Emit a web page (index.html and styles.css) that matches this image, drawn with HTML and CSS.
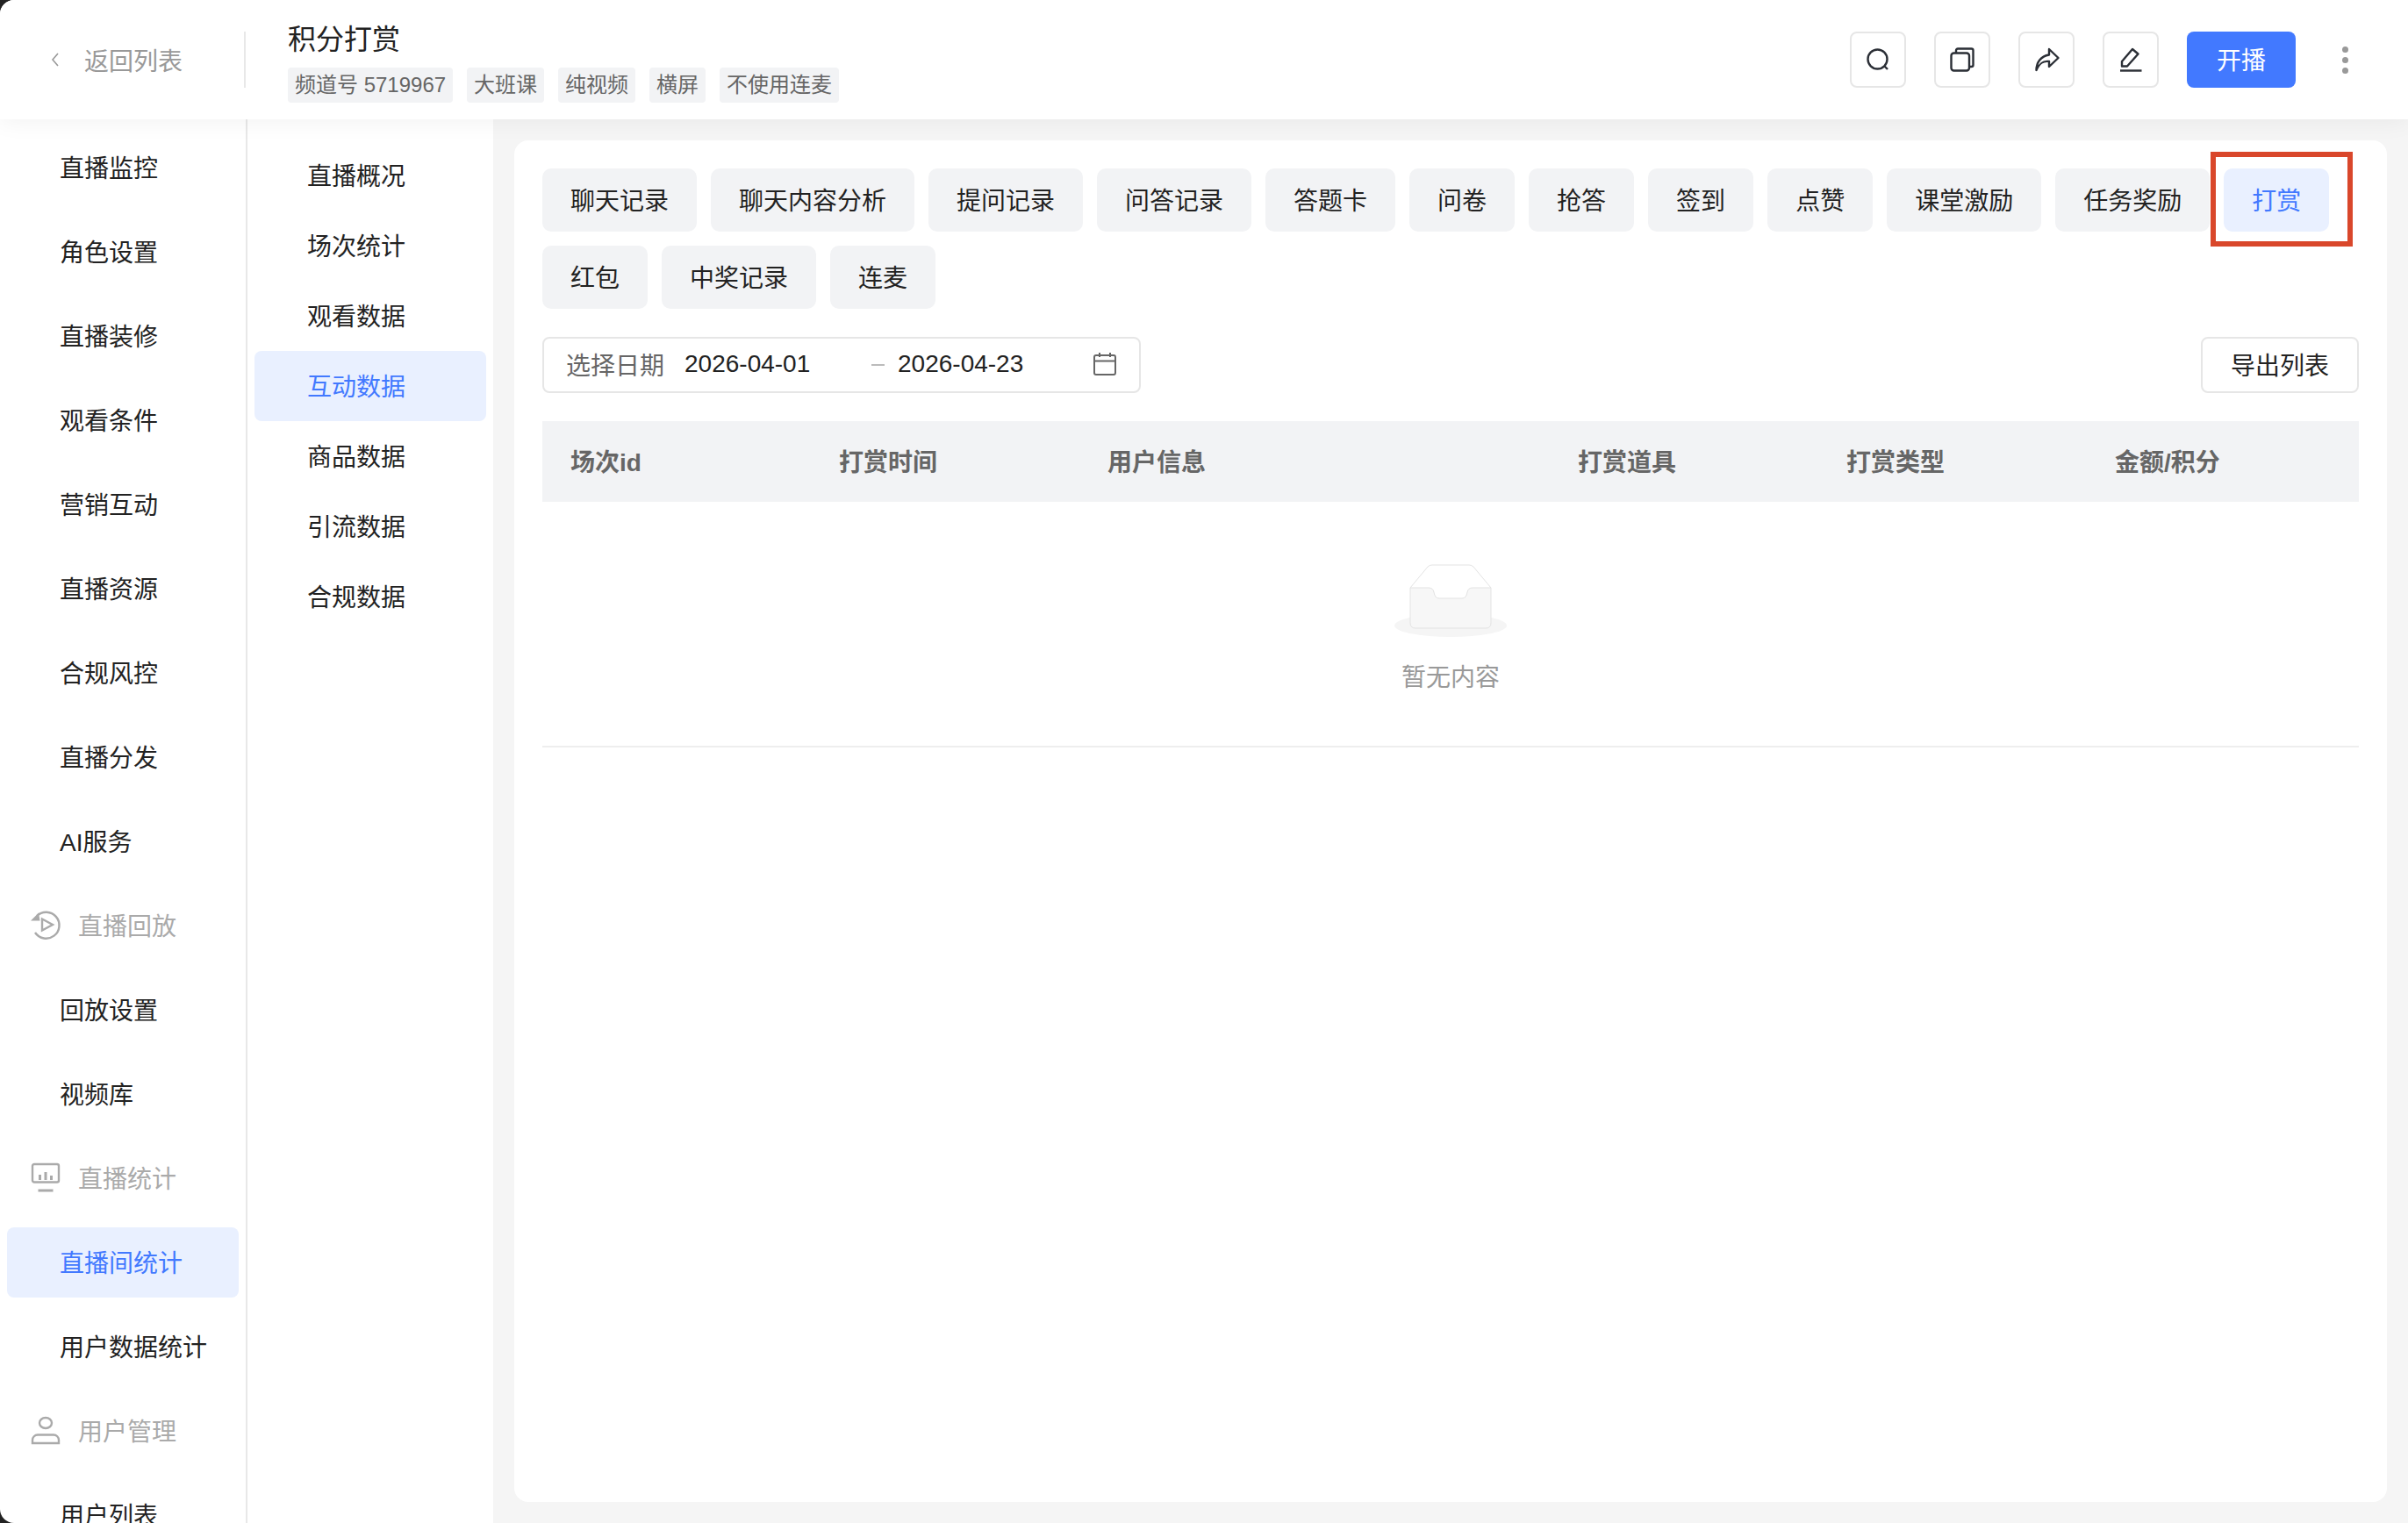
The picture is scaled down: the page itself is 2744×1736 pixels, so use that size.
FILE: index.html
```html
<!DOCTYPE html>
<html lang="zh-CN">
<head>
    <meta charset="UTF-8">
    <title>积分打赏</title>
    <link rel="stylesheet" href="styles.css">
</head>
<body>
    <div class="page">
        <header class="topbar">
            <a class="back">
                <svg class="back-icon" viewBox="0 0 12 16"><path d="M9 1 L3 8 L9 15"/></svg>
                <span>返回列表</span>
            </a>
            <div class="live-info">
                <div class="live-title">积分打赏</div>
                <div class="tags">
                    <span class="tag">频道号 5719967</span>
                    <span class="tag">大班课</span>
                    <span class="tag">纯视频</span>
                    <span class="tag">横屏</span>
                    <span class="tag">不使用连麦</span>
                </div>
            </div>
            <div class="actions">
                <button class="icon-btn">
                    <svg viewBox="0 0 32 32" class="stroke-dark"><circle cx="15.5" cy="15.5" r="11"/><path d="M23.5 23.5 L27 27"/></svg>
                </button>
                <button class="icon-btn">
                    <svg viewBox="0 0 32 32" class="stroke-dark"><rect x="3.5" y="8.5" width="20.5" height="20" rx="3"/><path d="M9 8.5 V5.5 a2 2 0 0 1 2-2 h15.5 a2 2 0 0 1 2 2 V22 a2 2 0 0 1-2 2 H24"/></svg>
                </button>
                <button class="icon-btn">
                    <svg viewBox="0 0 32 32" class="stroke-dark"><path d="M4.5 28 C4.5 20 9 12 19 10.5 V4 L29.5 14 L19 24 V18 C12 17 8 20 4.5 28 Z"/></svg>
                </button>
                <button class="icon-btn">
                    <svg viewBox="0 0 32 32" class="stroke-dark"><path d="M6 23.5 V18 L18 4 L24.5 9.5 L12 23.5 Z"/><path d="M4 28.5 H28.5"/></svg>
                </button>
                <button class="start-btn">开播</button>
                <div class="more"><i></i><i></i><i></i></div>
            </div>
        </header>

        <div class="layout">
            <nav class="sidebar">
                <a class="nav-item">直播监控</a>
                <a class="nav-item">角色设置</a>
                <a class="nav-item">直播装修</a>
                <a class="nav-item">观看条件</a>
                <a class="nav-item">营销互动</a>
                <a class="nav-item">直播资源</a>
                <a class="nav-item">合规风控</a>
                <a class="nav-item">直播分发</a>
                <a class="nav-item">AI服务</a>
                <div class="nav-group">
                    <svg viewBox="0 0 32 32"><path d="M6 6 A15 15 0 1 1 4 25"/><path class="fill" d="M-1 11.500 L9.500 11.500 L8 2.500 Z"/><path d="M12 9.500 L24 16 L12 22.500 Z"/></svg>
                    <span>直播回放</span>
                </div>
                <a class="nav-item">回放设置</a>
                <a class="nav-item">视频库</a>
                <div class="nav-group">
                    <svg viewBox="0 0 32 32"><rect x="1" y="1" width="30" height="20.500" rx="2"/><path class="bars" d="M9.500 19 V13 M16 19 V10 M22.500 19 V14"/><path class="bars" d="M7.500 31 H24.500"/></svg>
                    <span>直播统计</span>
                </div>
                <a class="nav-item active">直播间统计</a>
                <a class="nav-item">用户数据统计</a>
                <div class="nav-group">
                    <svg viewBox="0 0 32 32"><ellipse cx="16" cy="8" rx="7" ry="6"/><path d="M1 31 V27.500 a6 6 0 0 1 6-6 h18 a6 6 0 0 1 6 6 V31 Z"/></svg>
                    <span>用户管理</span>
                </div>
                <a class="nav-item">用户列表</a>
            </nav>

            <nav class="submenu">
                <a class="sub-item">直播概况</a>
                <a class="sub-item">场次统计</a>
                <a class="sub-item">观看数据</a>
                <a class="sub-item active">互动数据</a>
                <a class="sub-item">商品数据</a>
                <a class="sub-item">引流数据</a>
                <a class="sub-item">合规数据</a>
            </nav>

            <main class="main">
                <section class="card">
                    <div class="tabs">
                        <button class="tab">聊天记录</button>
                        <button class="tab">聊天内容分析</button>
                        <button class="tab">提问记录</button>
                        <button class="tab">问答记录</button>
                        <button class="tab">答题卡</button>
                        <button class="tab">问卷</button>
                        <button class="tab">抢答</button>
                        <button class="tab">签到</button>
                        <button class="tab">点赞</button>
                        <button class="tab">课堂激励</button>
                        <button class="tab">任务奖励</button>
                        <button class="tab active">打赏<span class="highlight"></span></button>
                        <button class="tab">红包</button>
                        <button class="tab">中奖记录</button>
                        <button class="tab">连麦</button>
                    </div>

                    <div class="toolbar">
                        <div class="date-range">
                            <span class="date-label">选择日期</span>
                            <span class="date-value">2026-04-01</span>
                            <span class="date-sep"></span>
                            <span class="date-value">2026-04-23</span>
                            <svg class="date-icon" viewBox="0 0 26 26"><rect x="1" y="3" width="24" height="22" rx="2"/><path d="M1 9.500 H25 M7 0 V5 M19 0 V5"/></svg>
                        </div>
                        <button class="export-btn">导出列表</button>
                    </div>

                    <div class="table-head">
                        <div>场次id</div>
                        <div>打赏时间</div>
                        <div>用户信息</div>
                        <div>打赏道具</div>
                        <div>打赏类型</div>
                        <div>金额/积分</div>
                    </div>
                    <div class="table-empty">
                        <svg class="empty-icon" viewBox="0 0 128 83">
                            <ellipse cx="64" cy="70" rx="64" ry="13" fill="#f5f5f5"/>
                            <path d="M18 27 L38 3 Q40 1 43 1 H85 Q88 1 90 3 L110 27" fill="#fff" stroke="#e3e3e3" stroke-width="1"/>
                            <path d="M18 27 H39 Q44 27 45 32 Q46 39 51 39 H77 Q82 39 83 32 Q84 27 89 27 H110 V67 Q110 73 104 73 H24 Q18 73 18 67 Z" fill="#f7f7f7" stroke="#e3e3e3" stroke-width="1"/>
                        </svg>
                        <p>暂无内容</p>
                    </div>
                </section>
            </main>
        </div>
    </div>
</body>
</html>
```

FILE: styles.css
```css
* {
    box-sizing: border-box;
}
html, body {
    margin: 0;
    padding: 0;
    height: 100%;
}
body {
    background: #222;
    overflow: hidden;
    font-family: "Liberation Sans", "Noto Sans CJK SC", sans-serif;
    font-size: 28px;
    color: #222;
}
button {
    font: inherit;
    color: inherit;
    cursor: pointer;
}
.page {
    display: flex;
    flex-direction: column;
    width: 2744px;
    height: 1736px;
    background: #fff;
    border-radius: 16px 0 0 16px;
    overflow: hidden;
}

/* top bar */
.topbar {
    position: relative;
    z-index: 2;
    flex: none;
    display: flex;
    align-items: center;
    height: 136px;
    background: #fff;
    box-shadow: 0 4px 24px rgba(0, 0, 0, 0.05);
}
.back {
    display: flex;
    align-items: center;
    gap: 27px;
    width: 280px;
    height: 64px;
    padding-left: 57px;
    border-right: 2px solid #e8e8e8;
    color: #999;
}
.back-icon {
    width: 12px;
    height: 16px;
    fill: none;
    stroke: #999;
    stroke-width: 1.6;
}
.live-info {
    display: flex;
    flex-direction: column;
    gap: 10px;
    margin-top: 3px;
    margin-left: 48px;
}
.live-title {
    font-size: 32px;
    line-height: 44px;
}
.tags {
    display: flex;
    gap: 16px;
}
.tag {
    height: 40px;
    padding: 0 8px;
    border-radius: 4px;
    background: #f2f3f5;
    color: #666;
    font-size: 24px;
    line-height: 40px;
}
.actions {
    display: flex;
    align-items: center;
    gap: 32px;
    margin-left: auto;
    padding-right: 68px;
}
.icon-btn {
    display: flex;
    align-items: center;
    justify-content: center;
    width: 64px;
    height: 64px;
    padding: 0;
    border: 2px solid #e6e6e6;
    border-radius: 8px;
    background: #fff;
}
.icon-btn svg {
    width: 32px;
    height: 32px;
}
.stroke-dark {
    fill: none;
    stroke: #2b2f36;
    stroke-width: 2.4;
    stroke-linejoin: round;
}
.start-btn {
    width: 124px;
    height: 64px;
    padding: 0 0 3px;
    border: none;
    border-radius: 8px;
    background: #4279ff;
    color: #fff;
}
.more {
    display: flex;
    flex-direction: column;
    gap: 5px;
    margin-left: 21px;
}
.more i {
    display: block;
    width: 7px;
    height: 7px;
    border-radius: 50%;
    background: #999;
}

.layout {
    flex: 1;
    display: flex;
    min-height: 0;
}

/* first level menu */
.sidebar {
    flex: none;
    display: flex;
    flex-direction: column;
    gap: 16px;
    width: 282px;
    padding: 15px 8px 0;
    border-right: 2px solid #e8e8e8;
    overflow: hidden;
}
.nav-item, .nav-group {
    flex: none;
    display: flex;
    align-items: center;
    height: 80px;
    padding-bottom: 3px;
    border-radius: 8px;
}
.nav-item {
    padding-left: 60px;
}
.nav-item.active {
    background: #e9f0ff;
    color: #4279ff;
}
.nav-group {
    gap: 21px;
    padding-left: 28px;
    color: #aaa;
}
.nav-group svg {
    width: 32px;
    height: 32px;
    overflow: visible;
    fill: none;
    stroke: #aaa;
    stroke-width: 2.4;
}
.nav-group svg .fill {
    fill: #aaa;
    stroke: none;
}
.nav-group svg .bars {
    stroke-width: 3;
}

/* second level menu */
.submenu {
    flex: none;
    display: flex;
    flex-direction: column;
    width: 280px;
    padding: 24px 8px 0;
}
.sub-item {
    display: flex;
    align-items: center;
    height: 80px;
    padding-left: 60px;
    padding-bottom: 3px;
    border-radius: 8px;
}
.sub-item.active {
    background: #e9f0ff;
    color: #4279ff;
}

/* content */
.main {
    flex: 1;
    min-width: 0;
    padding: 24px;
    background: #f5f5f5;
}
.card {
    height: 100%;
    padding: 32px;
    border-radius: 16px;
    background: #fff;
}
.tabs {
    display: flex;
    flex-wrap: wrap;
    gap: 16px;
}
.tab {
    position: relative;
    height: 72px;
    padding: 0 32px 3px;
    border: none;
    border-radius: 10px;
    background: #f2f3f5;
}
.tab.active {
    background: #e9f0ff;
    color: #4279ff;
}
.highlight {
    position: absolute;
    top: -19px;
    left: -15px;
    right: -27px;
    bottom: -17px;
    border: 6px solid #d9472b;
}
.toolbar {
    display: flex;
    justify-content: space-between;
    margin-top: 32px;
}
.date-range {
    display: flex;
    align-items: center;
    width: 682px;
    height: 64px;
    padding-left: 25px;
    padding-bottom: 3px;
    border: 2px solid #e6e6e6;
    border-radius: 8px;
    white-space: nowrap;
}
.date-label {
    color: #666;
    margin-right: 23px;
}
.date-value {
    width: 143px;
}
.date-sep {
    width: 15px;
    height: 2px;
    margin: 3px 15px 0 70px;
    background: #bbb;
}
.date-icon {
    width: 26px;
    height: 26px;
    margin-left: 80px;
    fill: none;
    stroke: #666;
    stroke-width: 2;
}
.export-btn {
    width: 180px;
    height: 64px;
    padding: 0 0 3px;
    border: 2px solid #e6e6e6;
    border-radius: 8px;
    background: #fff;
}
.table-head {
    display: grid;
    grid-template-columns: 306px 306px 536px 306px 306px 310px;
    align-items: center;
    height: 92px;
    margin-top: 32px;
    padding-bottom: 3px;
    background: #f2f3f5;
    color: #666;
    font-weight: bold;
}
.table-head div {
    padding-left: 32px;
}
.table-empty {
    display: flex;
    flex-direction: column;
    align-items: center;
    height: 280px;
    padding-top: 71px;
    border-bottom: 2px solid #eee;
}
.empty-icon {
    width: 128px;
    height: 83px;
}
.table-empty p {
    margin: 27px 0 0;
    color: #999;
    line-height: 40px;
}
```
